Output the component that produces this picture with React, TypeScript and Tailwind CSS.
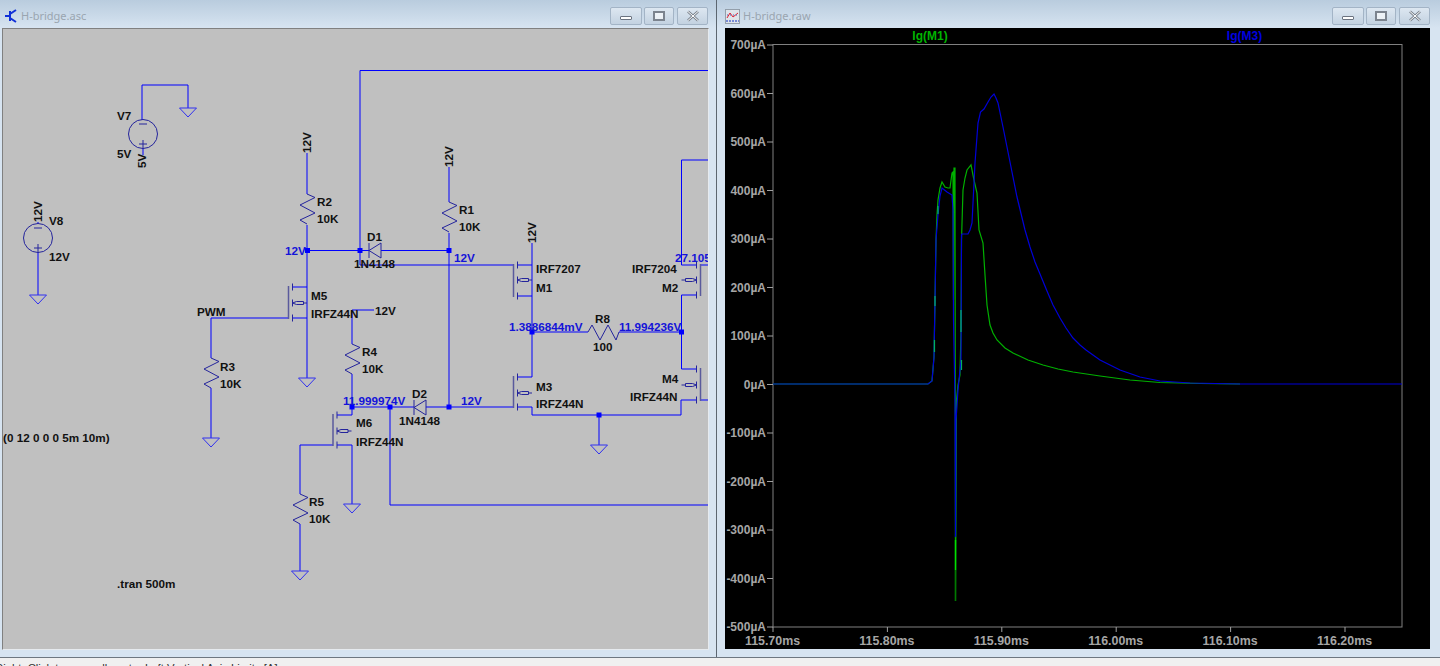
import React from 'react';

const BLUE = '#0000ff';
const NAVY = '#24249c';
const LABEL_FONT = '"Liberation Sans", Arial, sans-serif';

type Pt = [number, number];

const wires: Pt[][] = [
  [[142, 120], [142, 85], [188, 85], [188, 108]],
  [[143, 148], [143, 155]],
  [[38, 222], [38, 224]],
  [[38, 252], [38, 295]],
  [[307, 153], [307, 194]],
  [[307, 225], [307, 287], [292, 287]],
  [[292, 318], [307, 318]],
  [[307, 287], [307, 378]],
  [[360, 265], [360, 70.5], [708, 70.5]],
  [[307, 250.5], [369, 250.5]],
  [[381, 250.5], [449, 250.5]],
  [[360, 265], [513, 265]],
  [[449, 167], [449, 202]],
  [[449, 233], [449, 407]],
  [[211, 358], [211, 318], [289, 318]],
  [[211, 388], [211, 438]],
  [[374, 310], [352, 310], [352, 344]],
  [[352, 374], [352, 415], [337, 415]],
  [[352, 407], [414, 407]],
  [[426, 407], [513, 407]],
  [[390, 407], [390, 505], [708, 505]],
  [[352, 445], [337, 445]],
  [[352, 445], [352, 504]],
  [[333, 445], [300, 445], [300, 494]],
  [[300, 524], [300, 571]],
  [[532, 243], [532, 265], [517, 265]],
  [[532, 265], [532, 296], [517, 296]],
  [[532, 296], [532, 377], [517, 377]],
  [[517, 407], [532, 407], [532, 415], [681, 415], [681, 400], [696, 400]],
  [[532, 332], [588, 332]],
  [[619, 332], [681, 332]],
  [[599, 415], [599, 445]],
  [[708, 160], [681.5, 160], [681.5, 265], [696, 265]],
  [[696, 295], [681.5, 295], [681.5, 369], [696, 369]],
  [[701, 265], [708, 265]],
  [[701, 400], [708, 400]],
];

const nodes: Pt[] = [
  [307.5, 250.5], [360, 250.5], [449, 250.5], [449, 407], [352, 407], [390, 407],
  [532, 332], [681.5, 332], [599, 415],
];

const grounds: Pt[] = [[188, 108], [38, 295], [307, 378], [211, 438], [352, 504], [300, 571], [599, 445]];

const resistors: Pt[] = [[307, 194], [449, 202], [211, 358], [352, 344], [300, 494]];

type Fet = { x: number; top: number; bottom: number; arrow: number; dir: 1 | -1 };
const fets: Fet[] = [
  { x: 292.5, top: 287, bottom: 318, arrow: 303, dir: 1 },
  { x: 337, top: 415, bottom: 445, arrow: 431, dir: 1 },
  { x: 517.5, top: 265, bottom: 296, arrow: 280, dir: 1 },
  { x: 517.5, top: 377, bottom: 407, arrow: 393, dir: 1 },
  { x: 696.5, top: 265, bottom: 295, arrow: 280, dir: -1 },
  { x: 696.5, top: 369, bottom: 400, arrow: 385, dir: -1 },
];

type Label = { x: number; y: number; t: string; blue?: boolean; rot?: boolean };
const labels: Label[] = [
  { x: 117, y: 120, t: 'V7' },
  { x: 117, y: 158, t: '5V' },
  { x: 146, y: 168, t: '5V', rot: true },
  { x: 311, y: 153, t: '12V', rot: true },
  { x: 452.5, y: 167, t: '12V', rot: true },
  { x: 41.5, y: 222, t: '12V', rot: true },
  { x: 536, y: 243, t: '12V', rot: true },
  { x: 49, y: 225, t: 'V8' },
  { x: 49, y: 261, t: '12V' },
  { x: 317, y: 206, t: 'R2' },
  { x: 317, y: 223, t: '10K' },
  { x: 459, y: 214, t: 'R1' },
  { x: 459, y: 231, t: '10K' },
  { x: 367, y: 241, t: 'D1' },
  { x: 354, y: 268, t: '1N4148' },
  { x: 311, y: 300, t: 'M5' },
  { x: 311, y: 318, t: 'IRFZ44N' },
  { x: 375, y: 315, t: '12V' },
  { x: 197, y: 316, t: 'PWM' },
  { x: 220, y: 371, t: 'R3' },
  { x: 220, y: 388, t: '10K' },
  { x: 362, y: 356, t: 'R4' },
  { x: 362, y: 373, t: '10K' },
  { x: 412, y: 398, t: 'D2' },
  { x: 399, y: 425, t: '1N4148' },
  { x: 356, y: 427, t: 'M6' },
  { x: 356, y: 446, t: 'IRFZ44N' },
  { x: 309, y: 506, t: 'R5' },
  { x: 309, y: 523, t: '10K' },
  { x: 536, y: 273, t: 'IRF7207' },
  { x: 536, y: 292, t: 'M1' },
  { x: 536, y: 391, t: 'M3' },
  { x: 536, y: 408, t: 'IRFZ44N' },
  { x: 632, y: 273, t: 'IRF7204' },
  { x: 662, y: 292, t: 'M2' },
  { x: 662, y: 383, t: 'M4' },
  { x: 630, y: 401, t: 'IRFZ44N' },
  { x: 595, y: 323, t: 'R8' },
  { x: 593, y: 351, t: '100' },
  { x: 3, y: 442, t: '(0 12 0 0 0 5m 10m)' },
  { x: 117, y: 588, t: '.tran 500m' },
  { x: 285, y: 255, t: '12V', blue: true },
  { x: 454, y: 262, t: '12V', blue: true },
  { x: 461, y: 405, t: '12V', blue: true },
  { x: 343, y: 405, t: '11.999974V', blue: true },
  { x: 509, y: 331, t: '1.3886844mV', blue: true },
  { x: 619, y: 331, t: '11.994236V', blue: true },
  { x: 675, y: 262, t: '27.105', blue: true },
];

const line = (pts: Pt[]) => pts.map((p) => p.join(',')).join(' ');

const Schematic: React.FC = () => (
  <svg viewBox="3 29 705 620" className="block h-full w-full" style={{ fontFamily: LABEL_FONT }}>
    {wires.map((w, i) => (
      <polyline key={i} points={line(w)} fill="none" stroke={BLUE} strokeWidth="1" />
    ))}
    {nodes.map(([x, y], i) => (
      <rect key={i} x={x - 2.5} y={y - 2.5} width="5" height="5" fill={BLUE} />
    ))}
    {grounds.map(([x, y], i) => (
      <polygon key={i} points={`${x - 8.5},${y} ${x + 8.5},${y} ${x},${y + 9}`} fill="none" stroke="#3030f0" />
    ))}
    {resistors.map(([x, y], i) => (
      <polyline
        key={i}
        points={line([[x, y], [x + 8, y + 3.5], [x - 7, y + 11], [x + 8, y + 19], [x - 7, y + 26], [x, y + 30]])}
        fill="none"
        stroke={NAVY}
      />
    ))}
    <polyline
      points="588,332 592,325 600,340 608,325 616,340 619,332"
      fill="none"
      stroke={NAVY}
    />
    {[
      [143, 134],
      [38, 238],
    ].map(([cx, cy]) => (
      <g key={cx} stroke={NAVY} fill="none">
        <circle cx={cx} cy={cy} r="14.5" />
        <path d={`M${cx - 4} ${cy - 10}h8M${cx - 4} ${cy + 10}h8M${cx} ${cy + 6}v8`} />
      </g>
    ))}
    {/* diodes */}
    <g stroke={NAVY} fill="none">
      <path d="M369 243v15M381 243l-12 7.5 12 7.5z" />
      <path d="M414 400v15M426 400l-12 7.5 12 7.5z" />
    </g>
    {fets.map((f) => {
      const chan = f.x - 4 * f.dir;
      const wire = f.dir === 1 ? f.x + 14.5 : f.x - 15;
      return (
        <g key={`${f.x}-${f.top}`} stroke={NAVY} fill="none">
          <path d={`M${f.x} ${f.top - 3.5}v7M${f.x} ${f.bottom - 3.5}v7M${f.x} ${f.arrow - 3.5}v7`} />
          <path d={`M${chan} ${f.top - 1}V${f.bottom + 1}`} stroke="#5a5a9c" strokeWidth="1.5" />
          <path d={`M${f.x} ${f.arrow}L${f.x + 4 * f.dir} ${f.arrow - 1.5}H${f.x + 11 * f.dir}V${f.arrow + 1.5}H${f.x + 4 * f.dir}Z`} />
          <path d={`M${f.x + 11 * f.dir} ${f.arrow}H${wire}`} />
        </g>
      );
    })}
    {labels.map((l, i) => (
      <text
        key={i}
        x={l.x}
        y={l.y}
        fontSize="11.7"
        fontWeight="700"
        fill={l.blue ? '#1414d8' : '#111111'}
        transform={l.rot ? `rotate(-90 ${l.x} ${l.y})` : undefined}
      >
        {l.t}
      </text>
    ))}
  </svg>
);

const yTicks = [700, 600, 500, 400, 300, 200, 100, 0, -100, -200, -300, -400, -500];
const xTicks = ['115.70ms', '115.80ms', '115.90ms', '116.00ms', '116.10ms', '116.20ms'];

const greenTrace: Pt[] = [
  [773, 384], [928, 384], [932, 381], [934, 357], [935, 300], [936, 240], [937, 215], [938, 200], [940, 188], [942, 182],
  [945, 187], [948, 188], [950, 188], [952, 173], [953, 172], [953.5, 300], [954, 168], [955, 168], [955.5, 601], [956.5, 400],
  [958, 385], [960, 375], [961, 330], [961.5, 240], [963, 190], [965, 178], [967, 170], [971, 165], [974, 180], [977, 193],
  [979, 230], [983, 243], [985, 275], [987, 305], [990, 325], [993, 333], [997, 340], [1005, 348], [1013, 353], [1028, 360],
  [1043, 365], [1058, 369], [1073, 372], [1100, 376], [1130, 380], [1160, 382.5], [1200, 383.5], [1240, 384],
];

const blueTrace: Pt[] = [
  [773, 384], [928, 384], [932, 381], [934, 357], [935, 300], [936, 240], [938, 215], [940, 196], [942, 188], [947, 192],
  [952, 195], [953, 210], [953.5, 320], [955, 400], [955.5, 537], [956, 420], [958, 390], [959, 380], [961, 360], [961.5, 235],
  [962, 234], [968, 234], [970, 230], [972, 223], [975, 163], [978, 123], [980.5, 112], [984, 109], [988, 102], [991, 97],
  [994, 94], [996, 98], [998, 103], [1003, 127], [1010, 162], [1017, 197], [1025, 230], [1030, 247], [1035, 262], [1040, 274],
  [1047, 291], [1053, 305], [1060, 318], [1066, 328], [1073, 338], [1080, 345], [1086, 350], [1093, 355], [1100, 360], [1120, 370],
  [1140, 377], [1160, 381], [1190, 383], [1240, 384], [1402, 384],
];

const Plot: React.FC = () => (
  <svg viewBox="725 28 705 621" className="block h-full w-full" style={{ fontFamily: LABEL_FONT }}>
    <text x="930" y="40" fontSize="12" fontWeight="700" fill="#00b400" textAnchor="middle">Ig(M1)</text>
    <text x="1244.5" y="40" fontSize="12" fontWeight="700" fill="#0000e0" textAnchor="middle">Ig(M3)</text>
    <rect x="773" y="44.5" width="629" height="582.5" fill="none" stroke="#808080" />
    {yTicks.map((v, i) => {
      const y = 45 + i * 48.5;
      return (
        <g key={v}>
          <path d={`M767 ${y}H773`} stroke="#a0a0a0" />
          <text x="766" y={y + 4} fontSize="12" fontWeight="700" fill="#a6a6a6" textAnchor="end">
            {v}µA
          </text>
        </g>
      );
    })}
    {xTicks.map((t, i) => {
      const x = 773 + i * 114.4;
      return (
        <g key={t}>
          <path d={`M${x} 627V632`} stroke="#a0a0a0" />
          <text x={x - 0.5} y="645" fontSize="12.4" fontWeight="700" fill="#a6a6a6" textAnchor="middle">
            {t}
          </text>
        </g>
      );
    })}
    <polyline points={line(greenTrace)} fill="none" stroke="#00b000" strokeWidth="1.2" />
    <polyline points={line(blueTrace)} fill="none" stroke="#0000d8" strokeWidth="1.2" />
    <path d="M955.5 540V570" stroke="#00e000" strokeWidth="1.4" />
    <path d="M955.5 570V601" stroke="#007a00" strokeWidth="1.4" />
    <path d="M935 296v10M934.5 340v12M938 206v8M961 310v22M961.5 360v10" stroke="#00b060" strokeWidth="1.2" />
  </svg>
);

const SchematicIcon: React.FC = () => (
  <svg viewBox="0 0 14 16" className="h-4 w-[14px]">
    <path d="M1 8h5M6 3v10M6 6l6-4M6 10l6 4" stroke="#1030d8" strokeWidth="2" fill="none" />
  </svg>
);

const PlotIcon: React.FC = () => (
  <svg viewBox="0 0 15 15" className="h-[15px] w-[15px]">
    <rect x="0.5" y="0.5" width="14" height="14" fill="#dfe4ea" stroke="#55606c" strokeDasharray="1 1" />
    <path d="M2 9l3-5 3 4 5-4" stroke="#e02030" fill="none" />
    <path d="M1 12h13" stroke="#1030c0" strokeDasharray="2 1" />
    <path d="M2 6h11" stroke="#4060c0" strokeDasharray="1 2" />
  </svg>
);

const WinButtons: React.FC = () => (
  <div className="flex gap-[2px]">
    <div className="flex h-[18px] w-[32px] items-center justify-center rounded-[2px] border border-[#a3b4c6] bg-gradient-to-b from-[#dde7f1] to-[#c3d2e1]">
      <div className="mt-[3px] h-[4px] w-[12px] rounded-[1px] border border-[#6b7380] bg-white" />
    </div>
    <div className="flex h-[18px] w-[30px] items-center justify-center rounded-[2px] border border-[#a3b4c6] bg-gradient-to-b from-[#dde7f1] to-[#c3d2e1]">
      <div className="h-[10px] w-[12px] border-2 border-[#7b838e] bg-white/60" />
    </div>
    <div className="ml-[1px] flex h-[18px] w-[31px] items-center justify-center rounded-[2px] border border-[#a3b4c6] bg-gradient-to-b from-[#dde7f1] to-[#c3d2e1]">
      <svg viewBox="0 0 14 12" className="h-3 w-[14px]">
        <path d="M2 1.5l10 9M12 1.5l-10 9" stroke="#7b838e" strokeWidth="2.6" fill="none" />
        <path d="M2 1.5l10 9M12 1.5l-10 9" stroke="#ffffff" strokeWidth="1" fill="none" />
      </svg>
    </div>
  </div>
);

const TitleBar: React.FC<{ title: string; icon: React.ReactNode; left: string; right: string }> = ({ title, icon, left, right }) => (
  <div className="flex h-[28px] shrink-0 items-start justify-between bg-gradient-to-b from-[#b9ccde] to-[#d7e4f1]">
    <div className={`flex items-center gap-[3px] pt-[8px] ${left}`}>
      {icon}
      <span className="text-[11px] leading-[16px] text-[#9aa5b0] [font-family:'Noto_Sans',sans-serif]">{title}</span>
    </div>
    <div className={`pt-[7px] ${right}`}>
      <WinButtons />
    </div>
  </div>
);

export default function App() {
  return (
    <div className="flex h-[666px] w-[1440px] flex-col overflow-hidden bg-[#f0f0f0]">
      <div className="flex h-[658px] shrink-0 border-b border-[#6e7780]">
        <div className="flex w-[717px] shrink-0 flex-col border-r border-[#5c6670] bg-[#d7e4f1]">
          <TitleBar title="H-bridge.asc" icon={<SchematicIcon />} left="pl-[4px]" right="pr-[8px]" />
          <div className="ml-[2px] mr-[7px] h-[622px] overflow-hidden border-b border-l border-r border-t border-b-[#e6eaee] border-l-[#808080] border-r-[#e6eaee] border-t-[#808080] bg-[#c0c0c0]">
            <Schematic />
          </div>
          <div className="flex-1" />
        </div>
        <div className="flex flex-1 flex-col bg-[#d7e4f1]">
          <TitleBar title="H-bridge.raw" icon={<PlotIcon />} left="pl-[8px]" right="pr-[10px]" />
          <div className="ml-[8px] mr-[10px] h-[621px] overflow-hidden bg-black">
            <Plot />
          </div>
          <div className="flex-1" />
        </div>
      </div>
      <div className="h-[8px] overflow-hidden bg-[#f0f0f0] pt-[3px]">
        <span className="-ml-[5px] block text-[11.3px] leading-[14px] text-[#333] [font-family:'Liberation_Sans',sans-serif]">
          Right: Click to manually enter Left Vertical Axis Limits [A]
        </span>
      </div>
    </div>
  );
}
